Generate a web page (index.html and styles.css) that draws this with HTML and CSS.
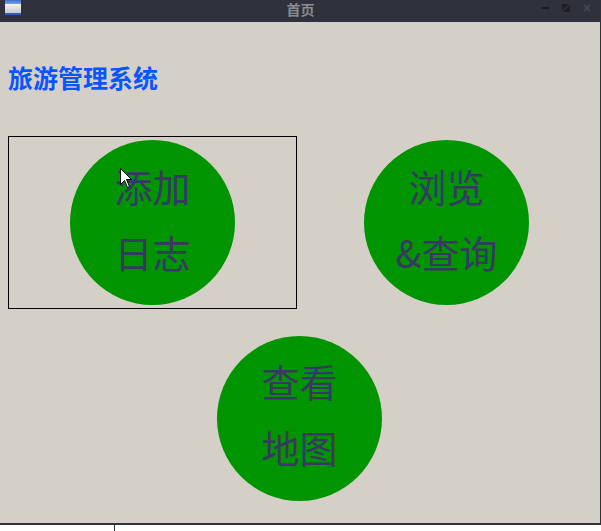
FILE: index.html
```html
<!DOCTYPE html>
<html lang="zh">
<head>
<meta charset="utf-8">
<title>首页</title>
<link rel="stylesheet" href="styles.css">
</head>
<body>
<div class="window">
  <div class="titlebar">
    <div class="tb-left"><div class="app-icon"><div class="app-icon-top"></div><div class="app-icon-body"></div><div class="app-icon-bottom"></div></div></div>
    <div class="title">首页</div>
    <div class="controls">
      <svg class="ctl" width="8" height="8" viewBox="0 0 8 8"><rect x="0" y="3" width="8" height="2" fill="#1c1e24"/></svg>
      <svg class="ctl" width="8" height="8" viewBox="0 0 8 8"><polygon points="0,0 7,0 0,7" fill="#1c1e24"/><polygon points="8,1 8,8 1,8" fill="#1c1e24"/></svg>
      <svg class="ctl" width="8" height="8" viewBox="0 0 8 8"><path d="M1 1 L7 7 M7 1 L1 7" stroke="#43464d" stroke-width="2"/></svg>
    </div>
  </div>
  <div class="content">
    <h1 class="heading">旅游管理系统</h1>
    <div class="grid">
      <div class="cell cell-focus"><div class="circle"><span>添加</span><span>日志</span></div></div>
      <div class="cell"><div class="circle"><span>浏览</span><span>&amp;查询</span></div></div>
      <div class="cell cell-wide"><div class="circle"><span>查看</span><span>地图</span></div></div>
    </div>
  </div>
  <div class="taskbar"><div class="task-divider"></div></div>
  <svg class="cursor" width="13" height="21" viewBox="0 0 13 21"><path d="M0.5 0.5 L0.5 16.5 L4.5 12.5 L7.5 19.5 L9.5 18.5 L6.5 11.5 L11.5 11.5 Z" fill="#ffffff" stroke="#000000" stroke-width="1"/></svg>
</div>
</body>
</html>
```

FILE: styles.css
```css
html, body {
  margin: 0;
  padding: 0;
  background: #ffffff;
}
.window {
  position: relative;
  width: 601px;
  height: 531px;
  display: flex;
  flex-direction: column;
  font-family: "Noto Sans CJK SC", "Noto Sans", sans-serif;
}
.titlebar {
  height: 22px;
  flex: none;
  background: #2f323c;
  display: grid;
  grid-template-columns: 1fr auto 1fr;
}
.tb-left {
  padding-left: 5px;
}
.app-icon {
  width: 16px;
  height: 15px;
  display: flex;
  flex-direction: column;
}
.app-icon-top {
  height: 4px;
  background: linear-gradient(#3d6fcf, #7aa3e6);
}
.app-icon-body {
  flex: 1;
  background: linear-gradient(#f2f2f2, #c9c9c9);
}
.app-icon-bottom {
  height: 2px;
  background: #2b5cc0;
}
.title {
  font-size: 14px;
  line-height: 18px;
  font-weight: bold;
  color: #898c92;
}
.controls {
  display: flex;
  justify-content: flex-end;
  align-items: flex-start;
  gap: 13px;
  padding-right: 10px;
  padding-top: 4px;
}
.ctl {
  display: block;
}
.content {
  flex: none;
  height: 503px;
  box-sizing: border-box;
  background: #d4d0c8;
  border-right: 1px solid #2f323c;
  border-bottom: 2px solid #2f323c;
  padding: 43px 0 0 8px;
  display: flex;
  flex-direction: column;
}
.heading {
  margin: 0;
  font-size: 25px;
  line-height: 25px;
  font-weight: bold;
  color: #0a55fb;
}
.grid {
  margin-top: 46px;
  flex: 1;
  display: grid;
  grid-template-columns: 289px 289px;
  grid-template-rows: 173px 1fr;
  column-gap: 5px;
  row-gap: 4px;
}
.cell {
  display: flex;
  align-items: center;
  justify-content: center;
  box-sizing: border-box;
}
.cell-focus {
  border: 1px solid #000000;
}
.cell-wide {
  grid-column: 1 / 3;
}
.circle {
  width: 165px;
  height: 165px;
  border-radius: 50%;
  background: #009400;
  display: flex;
  flex-direction: column;
  align-items: center;
  justify-content: center;
  box-sizing: border-box;
  padding-bottom: 8px;
  font-size: 38px;
  line-height: 66px;
  color: #363a63;
}
.taskbar {
  flex: 1;
  background: #ffffff;
}
.task-divider {
  margin-left: 114px;
  width: 1px;
  height: 100%;
  background: #2f323c;
}
.cursor {
  position: absolute;
  left: 120px;
  top: 168px;
}
```
